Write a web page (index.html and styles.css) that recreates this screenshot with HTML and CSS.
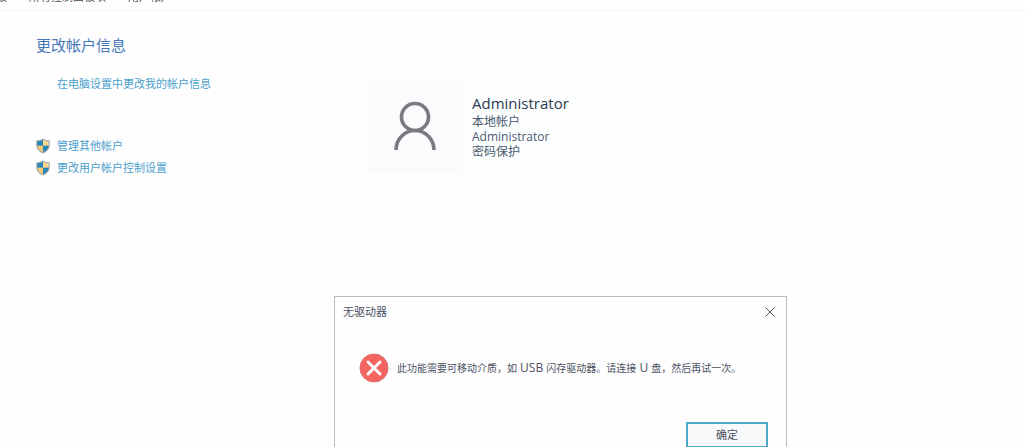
FILE: index.html
```html
<!DOCTYPE html>
<html lang="zh-CN">
<head>
<meta charset="utf-8">
<title>用户帐户</title>
<link rel="stylesheet" href="styles.css">
</head>
<body>
<svg class="defs" aria-hidden="true">
  <symbol id="shield" viewBox="0 0 14 16">
    <path d="M7 .5C5.400 1.800 3 2.300.3 2.400v4.900c0 3.800 2.600 6.400 6.700 8.200 4.100-1.800 6.700-4.400 6.700-8.200V2.400C11 2.300 8.600 1.800 7 .5z" fill="#9aa6ac"/>
    <path d="M7 1.700C5.400 2.800 3.500 3.200 1.400 3.300v4.500H7z" fill="#2786b8"/>
    <path d="M7 1.700c1.600 1.100 3.500 1.500 5.600 1.600v4.500H7z" fill="#fdd78c"/>
    <path d="M1.400 7.800H7v6.600C3.500 12.800 1.500 10.800 1.400 7.800z" fill="#f8c774"/>
    <path d="M12.600 7.800H7v6.600c3.500-1.600 5.500-3.600 5.600-6.600z" fill="#2786b8"/>
  </symbol>
</svg>
<nav class="breadcrumb" aria-label="路径">
  <span>板</span><span>所有控制面板项</span><span>用户帐户</span>
</nav>
<main class="content">
  <section class="tasks">
    <h1 class="heading">更改帐户信息</h1>
    <a class="link settings" href="#">在电脑设置中更改我的帐户信息</a>
    <ul class="list">
      <li class="item"><svg class="shield"><use href="#shield"/></svg><a class="link" href="#">管理其他帐户</a></li>
      <li class="item"><svg class="shield"><use href="#shield"/></svg><a class="link" href="#">更改用户帐户控制设置</a></li>
    </ul>
  </section>
  <section class="account">
    <div class="avatar">
      <svg class="person" viewBox="0 0 44 50" fill="none" stroke="#7b7a82" stroke-width="3.600">
        <circle cx="22" cy="16" r="13.500"/>
        <path d="M3 49a19 19.500 0 0 1 38 0"/>
      </svg>
    </div>
    <div class="details">
      <p class="name">Administrator</p>
      <p class="line">本地帐户</p>
      <p class="line">Administrator</p>
      <p class="line">密码保护</p>
    </div>
  </section>
</main>
<div class="dialog" role="dialog" aria-labelledby="dialog-title">
  <header class="titlebar">
    <h2 class="title" id="dialog-title">无驱动器</h2>
    <button class="close" type="button" aria-label="关闭"><svg class="cross" viewBox="0 0 10 10" stroke="#555" fill="none"><path d="M.5.5l9 9M9.500.5l-9 9"/></svg></button>
  </header>
  <div class="message">
    <svg class="error" viewBox="0 0 30 30" aria-hidden="true"><circle cx="15" cy="15" r="14" fill="#f5655f" stroke="#d8706c"/><path d="M9 9l12 12M21 9L9 21" stroke="#fff" stroke-width="3" stroke-linecap="round"/></svg>
    <p class="text">此功能需要可移动介质，如<span class="latin"> USB </span>闪存驱动器。请连接<span class="latin"> U </span>盘，然后再试一次。</p>
  </div>
  <footer class="actions"><button class="ok" type="button">确定</button></footer>
</div>
</body>
</html>
```
FILE: styles.css
```css
* { box-sizing: border-box; }
body {
  margin: 0;
  min-height: 100vh;
  overflow: hidden;
  background: #fefefe;
  color: #4c5263;
  font: 11px/16px "Open Sans", "Noto Sans CJK SC", sans-serif;
}
h1, h2, p, ul { margin: 0; padding: 0; font-weight: 400; }
.defs { position: absolute; width: 0; height: 0; }
.breadcrumb {
  display: flex;
  align-items: flex-end;
  gap: 22px;
  height: 11px;
  padding-bottom: 7px;
  border-bottom: 1px solid #f5f5f5;
  color: #555;
  font-size: 11px;
  line-height: 12px;
  white-space: nowrap;
}
.breadcrumb span:first-child { margin-left: -4px; }
.content { display: flex; padding: 24px 36px 0; }
.tasks { width: 327px; }
.heading { color: #4778b8; font-size: 15px; line-height: 20px; }
.link { color: #4ba0cc; text-decoration: none; white-space: nowrap; }
.settings { display: block; margin: 21px 0 0 21px; }
.list { margin-top: 43px; list-style: none; }
.item { display: flex; align-items: center; gap: 7px; height: 22px; }
.shield { width: 14px; height: 16px; }
.account {
  display: flex;
  gap: 10px;
  align-self: flex-start;
  margin-top: 41px;
  padding: 4px 10px 10px 5px;
  background: #fcfefe;
}
.avatar { display: grid; place-items: center; width: 94px; height: 92px; background: #fbfbfd; }
.person { width: 44px; height: 50px; }
.details { padding-top: 12px; }
.name { color: #2c3a50; font-size: 15px; line-height: 22px; }
.line { color: #4b5a70; font-size: 12px; line-height: 15px; }
.dialog {
  position: absolute;
  top: 296px;
  left: 334px;
  width: 453px;
  border: 1px solid #b9bbbd;
  background: #fefefe;
}
.titlebar { display: flex; align-items: center; justify-content: space-between; height: 30px; padding: 0 6px 0 8px; }
.title { font-size: 11px; }
.close { display: grid; place-items: center; width: 20px; height: 20px; padding: 0; border: 0; background: none; }
.cross { width: 10px; height: 10px; }
.message { display: flex; align-items: center; gap: 8px; padding: 26px 16px 0 24px; }
.error { flex: none; width: 30px; height: 30px; }
.text { font-size: 10px; white-space: nowrap; }
.latin { font-size: 12px; }
.actions { display: flex; justify-content: flex-end; padding: 39px 18px 12px; }
.ok {
  width: 82px;
  height: 26px;
  padding: 0;
  border: 2px solid #4aaac8;
  background: #f6f8fa;
  color: #4c5263;
  font: inherit;
}
```
